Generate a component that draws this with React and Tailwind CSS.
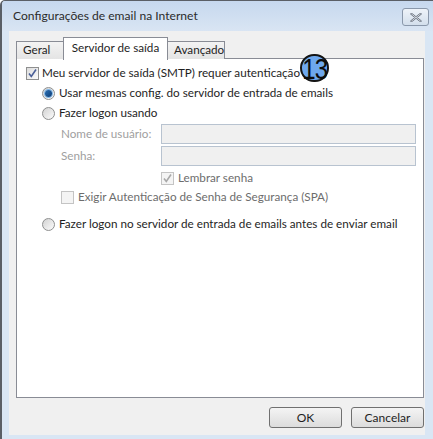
import React from 'react';

const font = { fontFamily: 'Lato, "Noto Sans", sans-serif' };

const Check = ({ checked, disabled }) => (
  <span
    className={`inline-flex items-center justify-center w-[13px] h-[13px] border shrink-0 ${
      disabled ? 'border-[#c4c4c4] bg-[#f4f4f4]' : 'border-[#8e8f8f] bg-gradient-to-br from-[#dcdcdc] to-[#fbfbfb]'
    }`}
  >
    {checked && (
      <svg width="11" height="11" viewBox="0 0 11 11">
        <path
          d="M2 5.5 L4.3 8.5 L9 1.5"
          fill="none"
          stroke={disabled ? '#a8a8a8' : '#4a5f97'}
          strokeWidth="1.6"
        />
      </svg>
    )}
  </span>
);

const Radio = ({ checked }) => (
  <span className="inline-flex items-center justify-center w-[13px] h-[13px] rounded-full border border-[#8e8f8f] bg-gradient-to-br from-[#d2d2d2] to-[#fcfcfc] shrink-0">
    {checked && (
      <span className="w-[7px] h-[7px] rounded-full bg-gradient-to-br from-[#2a6fb4] to-[#0d3f78] ring-1 ring-[#7fb6e8]" />
    )}
  </span>
);

const Tab = ({ label, active, w }) => (
  <div
    className={
      active
        ? `${w} h-[23px] pt-[4px] text-center bg-white border border-b-0 border-[#898c95] -mx-px relative z-10 text-[#1e1e1e]`
        : `${w} h-[18px] mt-[4px] pl-[6px] pt-[2px] bg-gradient-to-b from-[#f3f3f3] to-[#e4e4e4] border border-b-0 border-[#898c95] text-[#1e1e1e]`
    }
  >
    {label}
  </div>
);

export default function App() {
  return (
    <div
      className="w-[433px] h-[439px] overflow-hidden bg-[#d9e6f4] border-l-2 border-t border-[#5a5f66] rounded-tl-[5px] text-[11.7px] leading-none whitespace-nowrap"
      style={font}
    >
      {/* title bar */}
      <div className="h-[30px] flex items-center justify-between pl-[11px] pr-[4px] bg-gradient-to-b from-[#c6d8ee] to-[#d9e5f3]">
        <span className="text-[12.1px] text-[#2b2b2b]">Configurações de email na Internet</span>
        <div className="w-[27px] h-[18px] mt-[2px] rounded-[3px] border border-[#8a98ab] bg-gradient-to-b from-[#eef3f9] to-[#d3dfec] flex items-center justify-center">
          <svg width="12" height="9" viewBox="0 0 12 9">
            <path d="M1.5 1 L10.5 8 M10.5 1 L1.5 8" stroke="#5b6573" strokeWidth="2.2" strokeLinecap="round" />
            <path d="M1.5 1 L10.5 8 M10.5 1 L1.5 8" stroke="#f6f8fb" strokeWidth="0.8" strokeLinecap="round" />
          </svg>
        </div>
      </div>

      {/* client area */}
      <div className="ml-[7px] w-[416px] h-[404px] bg-[#f0f0f0] pl-[7px] pt-[6px]">
        <div className="flex items-start h-[22px]">
          <Tab label="Geral" w="w-[48px]" />
          <Tab label="Servidor de saída" w="w-[105px]" active />
          <Tab label="Avançado" w="w-[58px]" />
        </div>
        <div className="w-[408px] h-[340px] -mt-px bg-white border border-[#898c95] text-[#1e1e1e]">
          <div className="pl-[9px] pt-[5px] relative">
            <div className="flex items-center gap-[3px] h-[14px] mt-[2px]">
              <Check checked />
              <span>Meu servidor de saída (SMTP) requer autenticação</span>
            </div>
            {/* numbered callout */}
            <div className="absolute left-[283px] top-[-5px] w-[29px] h-[28px] rounded-full bg-[#6ea8ee] border-2 border-[#141414] flex items-center justify-center">
              <span
                className="text-[30px] leading-none tracking-[-1px] scale-x-[0.8] mt-px text-[#0c0c0c]"
                style={{ fontFamily: '"Liberation Sans", Arial, sans-serif' }}
              >
                13
              </span>
            </div>

            <div className="pl-[16px]">
              <div className="flex items-center gap-[4px] h-[14px] mt-[6px]">
                <Radio checked />
                <span>Usar mesmas config. do servidor de entrada de emails</span>
              </div>
              <div className="flex items-center gap-[4px] h-[14px] mt-[6px]">
                <Radio />
                <span>Fazer logon usando</span>
              </div>

              <div className="pl-[19px] text-[#a0a0a0]">
                <div className="flex items-center h-[20px] mt-[4px]">
                  <span className="w-[100px]">Nome de usuário:</span>
                  <div className="w-[255px] h-[20px] bg-[#f0f0f0] border border-[#b8c3d0]" />
                </div>
                <div className="flex items-center h-[20px] mt-[2px]">
                  <span className="w-[100px]">Senha:</span>
                  <div className="w-[255px] h-[20px] bg-[#f0f0f0] border border-[#b8c3d0]" />
                </div>
                <div className="flex items-center gap-[4px] h-[14px] mt-[5px] pl-[100px] text-[#6d6d6d]">
                  <Check checked disabled />
                  <span>Lembrar senha</span>
                </div>
                <div className="flex items-center gap-[4px] h-[14px] mt-[5px] text-[#6d6d6d]">
                  <Check disabled />
                  <span>Exigir Autenticação de Senha de Segurança (SPA)</span>
                </div>
              </div>

              <div className="flex items-center gap-[4px] h-[14px] mt-[13px]">
                <Radio />
                <span>Fazer logon no servidor de entrada de emails antes de enviar email</span>
              </div>
            </div>
          </div>
        </div>

        <div className="flex justify-end gap-[9px] mt-[9px] pr-px">
          {['OK', 'Cancelar'].map((b) => (
            <button
              key={b}
              className="w-[73px] h-[21px] rounded-[3px] border border-[#707070] bg-gradient-to-b from-[#f4f4f4] to-[#dcdcdc] text-[#1e1e1e] text-[12px]"
            >
              {b}
            </button>
          ))}
        </div>
      </div>
    </div>
  );
}
